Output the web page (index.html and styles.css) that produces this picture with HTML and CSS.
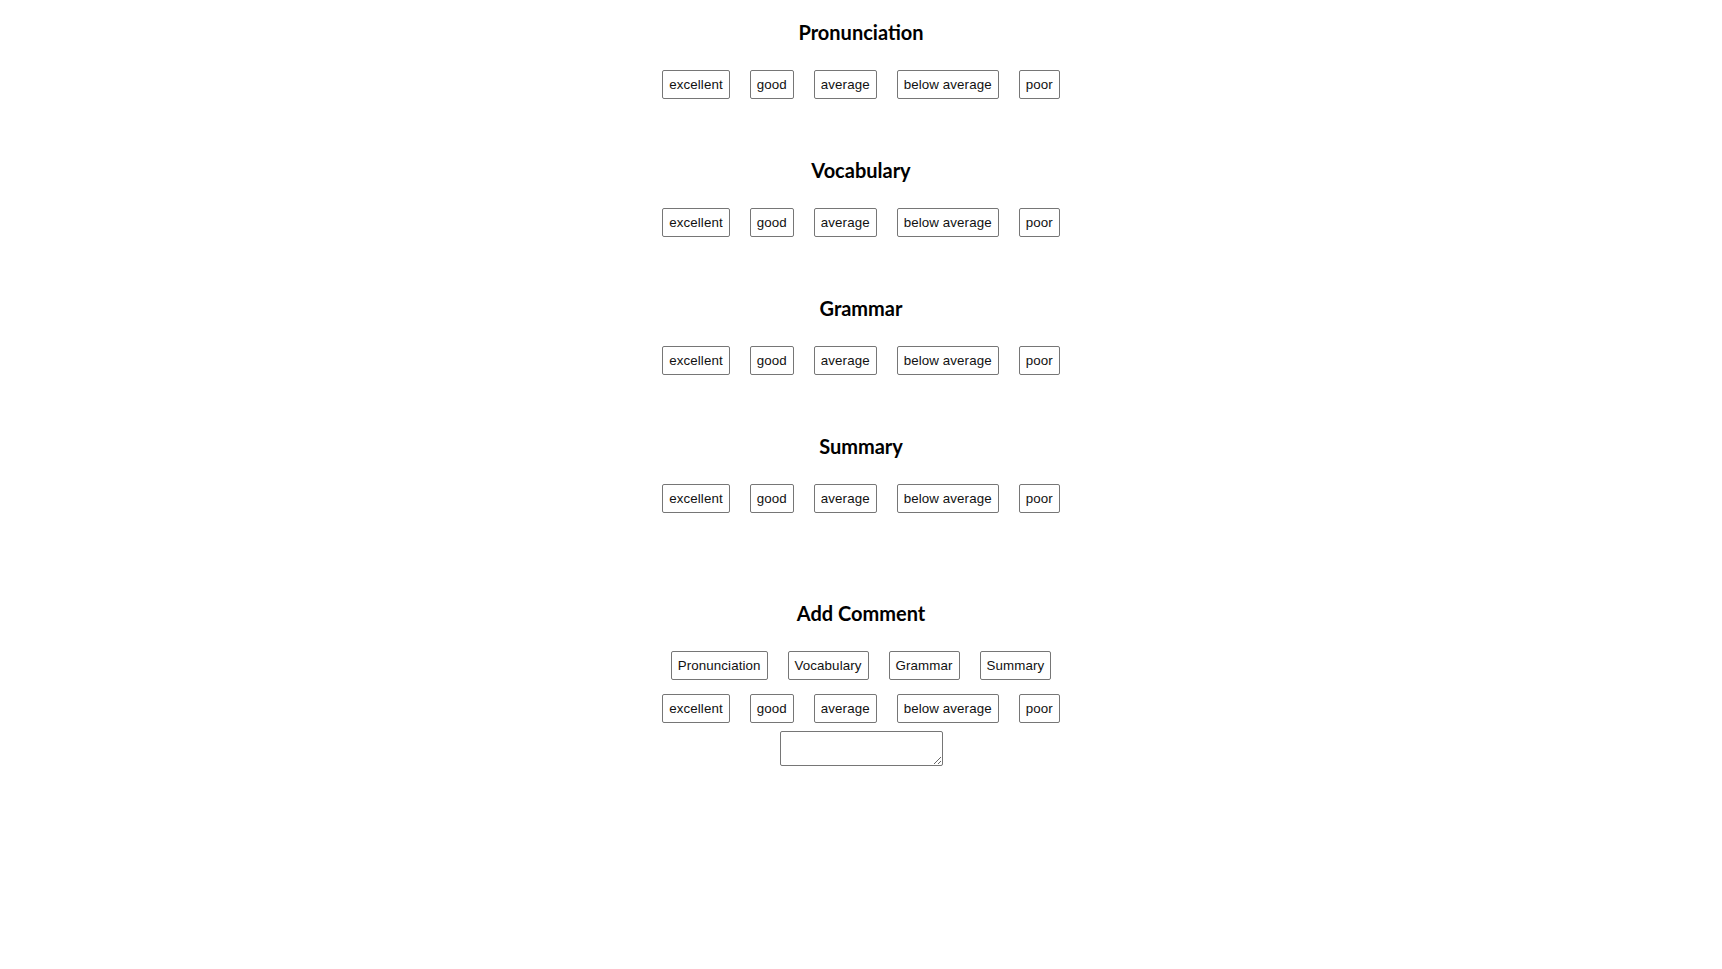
FILE: index.html
```html
<!DOCTYPE html>
<html lang="en">
<head>
<meta charset="utf-8">
<title>Evaluation</title>
<link rel="stylesheet" href="styles.css">
</head>
<body>
<main class="page">
  <section class="section">
    <h2 class="title">Pronunciation</h2>
    <div class="options">
      <button class="btn">excellent</button>
      <button class="btn">good</button>
      <button class="btn">average</button>
      <button class="btn">below average</button>
      <button class="btn">poor</button>
    </div>
  </section>
  <section class="section">
    <h2 class="title">Vocabulary</h2>
    <div class="options">
      <button class="btn">excellent</button>
      <button class="btn">good</button>
      <button class="btn">average</button>
      <button class="btn">below average</button>
      <button class="btn">poor</button>
    </div>
  </section>
  <section class="section">
    <h2 class="title">Grammar</h2>
    <div class="options">
      <button class="btn">excellent</button>
      <button class="btn">good</button>
      <button class="btn">average</button>
      <button class="btn">below average</button>
      <button class="btn">poor</button>
    </div>
  </section>
  <section class="section">
    <h2 class="title">Summary</h2>
    <div class="options">
      <button class="btn">excellent</button>
      <button class="btn">good</button>
      <button class="btn">average</button>
      <button class="btn">below average</button>
      <button class="btn">poor</button>
    </div>
  </section>
  <section class="section comment">
    <h2 class="title">Add Comment</h2>
    <div class="options">
      <button class="btn">Pronunciation</button>
      <button class="btn">Vocabulary</button>
      <button class="btn">Grammar</button>
      <button class="btn">Summary</button>
    </div>
    <div class="options ratings">
      <button class="btn">excellent</button>
      <button class="btn">good</button>
      <button class="btn">average</button>
      <button class="btn">below average</button>
      <button class="btn">poor</button>
    </div>
    <textarea class="comment-box"></textarea>
  </section>
</main>
</body>
</html>
```

FILE: styles.css
```css
html, body {
  margin: 0;
  padding: 0;
  background: #ffffff;
}

body {
  font-family: "Liberation Sans", Arial, sans-serif;
  color: #000000;
}

.page {
  display: flex;
  flex-direction: column;
  align-items: center;
  padding-top: 18px;
  gap: 57px;
}

.section {
  display: flex;
  flex-direction: column;
  align-items: center;
}

.title {
  margin: 0 0 24px;
  font-family: Lato, "Open Sans", sans-serif;
  font-weight: 700;
  font-size: 20px;
  line-height: 28px;
  color: #000000;
}

.options {
  display: flex;
  gap: 20px;
}

.btn {
  font-family: "Liberation Sans", Arial, sans-serif;
  font-size: 13.333px;
  line-height: 15px;
  letter-spacing: 0.1px;
  padding: 6px;
  margin: 0;
  border: 1px solid #767676;
  border-radius: 2px;
  background: #ffffff;
  color: #111111;
}

.comment {
  margin-top: 29px;
}

.ratings {
  margin-top: 14px;
}

.comment-box {
  box-sizing: border-box;
  width: 163px;
  height: 35px;
  margin-top: 8px;
  border: 1px solid #767676;
  border-radius: 2px;
  padding: 2px;
  background: #ffffff;
}
```
